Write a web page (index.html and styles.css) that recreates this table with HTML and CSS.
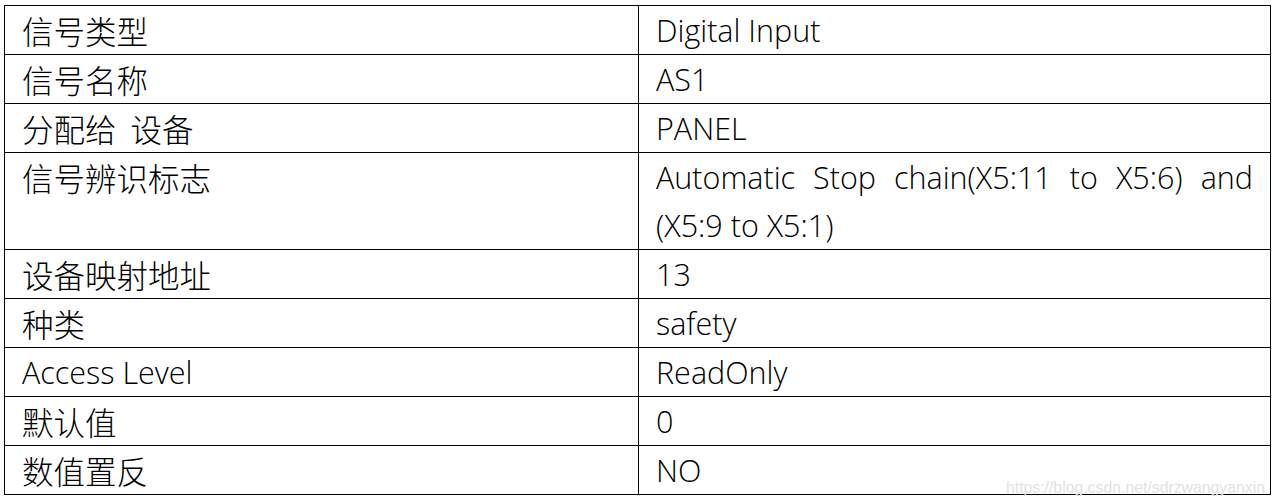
FILE: index.html
```html
<!DOCTYPE html>
<html lang="zh">
<head>
<meta charset="utf-8">
<link rel="stylesheet" href="styles.css">
</head>
<body>
<div class="page">
  <table class="sig">
    <colgroup><col class="c1"><col class="c2"></colgroup>
    <tr><td><span class="zh">信号类型</span></td><td>Digital Input</td></tr>
    <tr><td><span class="zh">信号名称</span></td><td>AS1</td></tr>
    <tr><td><span class="zh">分配给&nbsp; 设备</span></td><td>PANEL</td></tr>
    <tr><td><span class="zh">信号辨识标志</span></td><td class="just">Automatic Stop chain(X5:11 to X5:6) and <span class="nw">(X5:9 to X5:1)</span></td></tr>
    <tr><td><span class="zh">设备映射地址</span></td><td>13</td></tr>
    <tr><td><span class="zh">种类</span></td><td>safety</td></tr>
    <tr><td>Access Level</td><td>ReadOnly</td></tr>
    <tr><td><span class="zh">默认值</span></td><td>0</td></tr>
    <tr><td><span class="zh">数值置反</span></td><td>NO</td></tr>
  </table>
  <div class="wm">https://blog.csdn.net/sdrzwangyanxin</div>
</div>
</body>
</html>
```
FILE: styles.css
```css
html, body {
  margin: 0;
  padding: 0;
  background: #ffffff;
}
.page {
  position: relative;
  width: 1276px;
  height: 502px;
  padding: 5px 0 0 4px;
  box-sizing: border-box;
}
.sig {
  border-collapse: collapse;
  table-layout: fixed;
  width: 1267px;
  font-family: "Open Sans", "Noto Sans CJK SC", sans-serif;
  font-size: 30.5px;
  font-weight: 350;
  line-height: 48px;
  color: #000;
}
.c1 { width: 634px; }
.sig td {
  border: 1.4px solid #000;
  padding: 0 17px;
  vertical-align: top;
  height: 48px;
}
.sig td.just {
  text-align: justify;
}
.zh {
  display: block;
  height: 48px;
  font-family: "Noto Sans CJK SC", sans-serif;
  font-size: 31.5px;
  font-weight: 300;
  line-height: 48px;
}
.nw {
  white-space: nowrap;
}
.wm {
  position: absolute;
  right: 11px;
  top: 478px;
  font-family: "Liberation Sans", Arial, sans-serif;
  font-size: 15.8px;
  line-height: 20px;
  color: #e2e2e2;
}
```
